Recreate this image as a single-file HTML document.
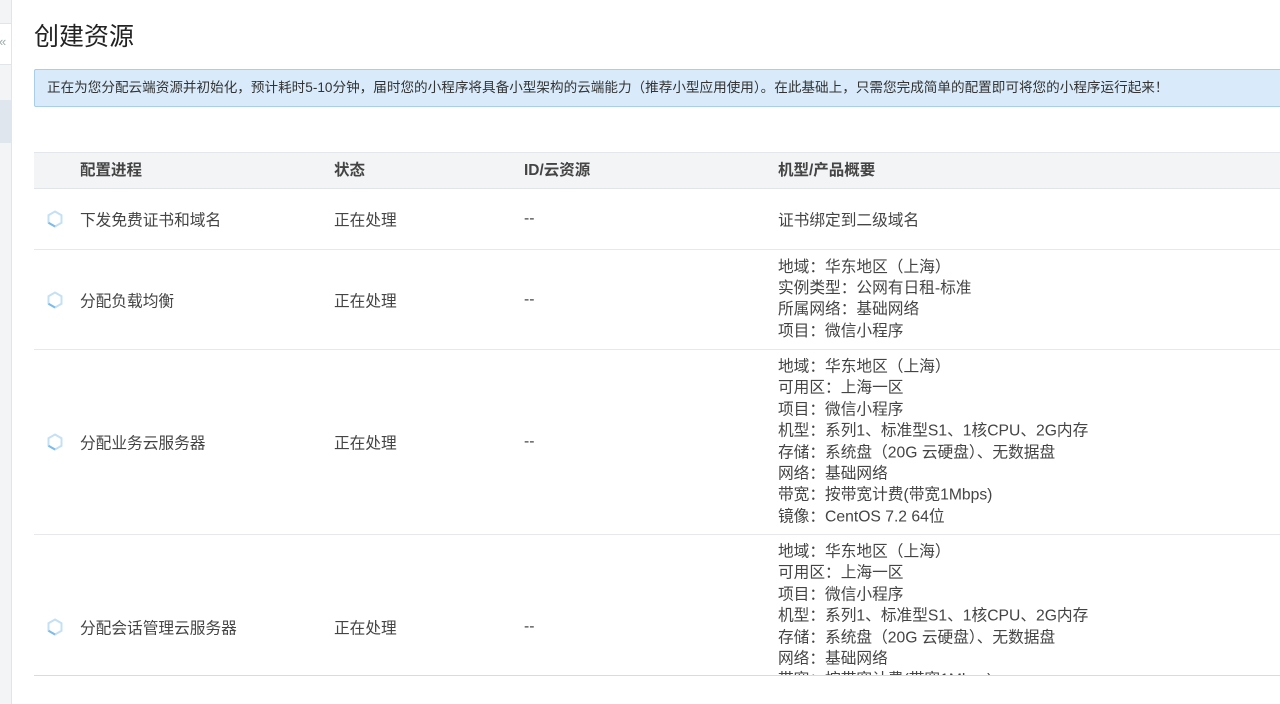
<!DOCTYPE html>
<html><head><meta charset="utf-8"><style>
*{margin:0;padding:0;box-sizing:border-box}
body{width:1280px;height:704px;overflow:hidden;background:#fff;font-family:"Liberation Sans","Noto Sans CJK SC",sans-serif;color:#444;position:relative}
.side{position:absolute;left:0;top:0;width:12px;height:704px;background:#f2f4f6;border-right:1px solid #e2e5e8}
.side .a{position:absolute;left:0;top:23px;width:11px;height:42px;background:#fff;border-top:1px solid #e2e5e8;border-bottom:1px solid #e2e5e8}
.side .b{position:absolute;left:0;top:100px;width:11px;height:43px;background:#dfe6ee}
.side .c{position:absolute;left:-1px;top:34px;font-size:13px;color:#9aa;}
h1{position:absolute;left:34px;top:17px;font-size:25px;font-weight:normal;color:#222}
.alert{position:absolute;left:34px;top:69px;width:1260px;height:38px;background:#d9ebfa;border:1px solid #a9cdec;border-radius:2px;font-size:13.6px;line-height:36px;padding-left:12px;color:#333;white-space:nowrap}
.tbl{position:absolute;left:34px;top:152px;width:1260px;height:524px;overflow:hidden;border-top:1px solid #e3e6eb;border-bottom:1px solid #d8dbe0}
.hd{height:36px;background:#f3f4f6;border-bottom:1px solid #e1e4e8;position:relative;font-weight:bold;font-size:15.5px;line-height:36px}
.row{position:relative;border-bottom:1px solid #e6e8eb;font-size:15.7px}
.c1,.c2,.c3,.c4{position:absolute;white-space:nowrap}
.c1{left:46px}.c2{left:300px}.c3{left:490px}.c4{left:744px}
.row .mid{top:50%;transform:translateY(-50%)}
.det{line-height:21.4px}
.ic{position:absolute;left:11px;top:50%;margin-top:-10px;width:20px;height:20px}
</style></head><body>
<div class="side"><div class="a"></div><div class="c">«</div><div class="b"></div></div>
<h1>创建资源</h1>
<div class="alert">正在为您分配云端资源并初始化，预计耗时5-10分钟，届时您的小程序将具备小型架构的云端能力（推荐小型应用使用）。在此基础上，只需您完成简单的配置即可将您的小程序运行起来！</div>
<div class="tbl">
<div class="hd"><span class="c1">配置进程</span><span class="c2">状态</span><span class="c3">ID/云资源</span><span class="c4">机型/产品概要</span></div>
<div class="row" style="height:61px">
<svg class="ic" viewBox="0 0 20 20"><path d="M10 2.5 L16.5 6.2 L16.5 13.8 L10 17.5 L3.5 13.8 L3.5 6.2 Z" fill="none" stroke="#c4e0f5" stroke-width="2"/><path d="M3.5 13.8 L10 17.5" stroke="#7dbbea" stroke-width="2"/></svg>
<span class="c1 mid">下发免费证书和域名</span><span class="c2 mid">正在处理</span><span class="c3 mid">--</span><span class="c4 mid">证书绑定到二级域名</span></div>
<div class="row" style="height:100px">
<svg class="ic" viewBox="0 0 20 20"><path d="M10 2.5 L16.5 6.2 L16.5 13.8 L10 17.5 L3.5 13.8 L3.5 6.2 Z" fill="none" stroke="#c4e0f5" stroke-width="2"/><path d="M3.5 13.8 L10 17.5" stroke="#7dbbea" stroke-width="2"/></svg>
<span class="c1 mid">分配负载均衡</span><span class="c2 mid">正在处理</span><span class="c3 mid">--</span><div class="c4 mid det">地域：华东地区（上海）<br>实例类型：公网有日租-标准<br>所属网络：基础网络<br>项目：微信小程序</div></div>
<div class="row" style="height:185px">
<svg class="ic" viewBox="0 0 20 20"><path d="M10 2.5 L16.5 6.2 L16.5 13.8 L10 17.5 L3.5 13.8 L3.5 6.2 Z" fill="none" stroke="#c4e0f5" stroke-width="2"/><path d="M3.5 13.8 L10 17.5" stroke="#7dbbea" stroke-width="2"/></svg>
<span class="c1 mid">分配业务云服务器</span><span class="c2 mid">正在处理</span><span class="c3 mid">--</span><div class="c4 mid det">地域：华东地区（上海）<br>可用区：上海一区<br>项目：微信小程序<br>机型：系列1、标准型S1、1核CPU、2G内存<br>存储：系统盘（20G 云硬盘）、无数据盘<br>网络：基础网络<br>带宽：按带宽计费(带宽1Mbps)<br>镜像：CentOS 7.2 64位</div></div>
<div class="row" style="height:185px">
<svg class="ic" viewBox="0 0 20 20"><path d="M10 2.5 L16.5 6.2 L16.5 13.8 L10 17.5 L3.5 13.8 L3.5 6.2 Z" fill="none" stroke="#c4e0f5" stroke-width="2"/><path d="M3.5 13.8 L10 17.5" stroke="#7dbbea" stroke-width="2"/></svg>
<span class="c1 mid">分配会话管理云服务器</span><span class="c2 mid">正在处理</span><span class="c3 mid">--</span><div class="c4 mid det">地域：华东地区（上海）<br>可用区：上海一区<br>项目：微信小程序<br>机型：系列1、标准型S1、1核CPU、2G内存<br>存储：系统盘（20G 云硬盘）、无数据盘<br>网络：基础网络<br>带宽：按带宽计费(带宽1Mbps)<br>镜像：CentOS 7.2 64位</div></div>
</div>
</body></html>
